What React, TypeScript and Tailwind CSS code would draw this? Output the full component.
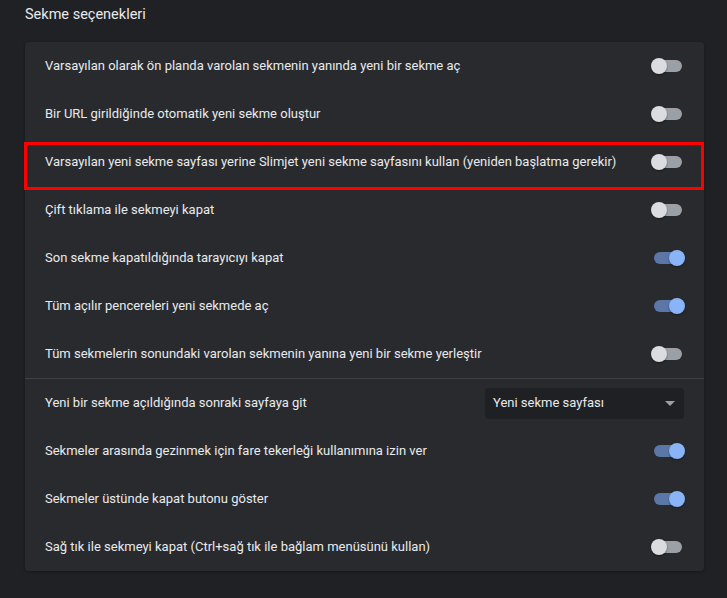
import React from 'react';

type Row =
  | { label: string; kind: 'toggle'; on: boolean }
  | { label: string; kind: 'select'; value: string };

const topRows: Row[] = [
  { label: 'Varsayılan olarak ön planda varolan sekmenin yanında yeni bir sekme aç', kind: 'toggle', on: false },
  { label: 'Bir URL girildiğinde otomatik yeni sekme oluştur', kind: 'toggle', on: false },
  { label: 'Varsayılan yeni sekme sayfası yerine Slimjet yeni sekme sayfasını kullan (yeniden başlatma gerekir)', kind: 'toggle', on: false },
  { label: 'Çift tıklama ile sekmeyi kapat', kind: 'toggle', on: false },
  { label: 'Son sekme kapatıldığında tarayıcıyı kapat', kind: 'toggle', on: true },
  { label: 'Tüm açılır pencereleri yeni sekmede aç', kind: 'toggle', on: true },
  { label: 'Tüm sekmelerin sonundaki varolan sekmenin yanına yeni bir sekme yerleştir', kind: 'toggle', on: false },
];

const bottomRows: Row[] = [
  { label: 'Yeni bir sekme açıldığında sonraki sayfaya git', kind: 'select', value: 'Yeni sekme sayfası' },
  { label: 'Sekmeler arasında gezinmek için fare tekerleği kullanımına izin ver', kind: 'toggle', on: true },
  { label: 'Sekmeler üstünde kapat butonu göster', kind: 'toggle', on: true },
  { label: 'Sağ tık ile sekmeyi kapat (Ctrl+sağ tık ile bağlam menüsünü kullan)', kind: 'toggle', on: false },
];

function Toggle({ on }: { on: boolean }) {
  return (
    <div className={`relative w-[28px] h-[12px] rounded-full ${on ? 'bg-[#5a77a8]' : 'bg-[#9aa0a6]'}`}>
      <span
        className={`absolute top-[-2px] w-[16px] h-[16px] rounded-full shadow-[0_1px_2px_rgba(0,0,0,0.4)] ${
          on ? 'left-[15px] bg-[#8ab4f8]' : 'left-[-3px] bg-[#dadce0]'
        }`}
      />
    </div>
  );
}

function Select({ value }: { value: string }) {
  return (
    <div className="w-[199px] h-[31px] rounded-[4px] bg-[#1f2023] flex items-center justify-between pl-[8px] pr-[9px] text-[13px] text-[#e8eaed]">
      <span>{value}</span>
      <svg width="10" height="5" viewBox="0 0 10 5">
        <path d="M0 0h10L5 5z" fill="#9aa0a6" />
      </svg>
    </div>
  );
}

function SettingRow({ row }: { row: Row }) {
  return (
    <div className="h-[48px] flex items-center justify-between pl-[20px]">
      <span className="text-[13px] text-[#e8eaed]">{row.label}</span>
      {row.kind === 'toggle' ? (
        <div className="pr-[22px]">
          <Toggle on={row.on} />
        </div>
      ) : (
        <div className="pr-[20px]">
          <Select value={row.value} />
        </div>
      )}
    </div>
  );
}

export default function App() {
  return (
    <div
      className="min-h-[598px] w-[727px] bg-[#202124] pl-[25px] pt-[6px]"
      style={{ fontFamily: 'Roboto, "Liberation Sans", sans-serif' }}
    >
      <h2 className="h-[18px] leading-[18px] text-[14.5px] text-[#e8eaed] font-normal">Sekme seçenekleri</h2>
      <div className="relative mt-[18px] w-[679px] rounded-[4px] bg-[#292a2d] shadow-[0_1px_3px_rgba(0,0,0,0.3)]">
        {topRows.map((r) => (
          <SettingRow key={r.label} row={r} />
        ))}
        <div className="h-px bg-[#3f4043]" />
        {bottomRows.map((r) => (
          <SettingRow key={r.label} row={r} />
        ))}
        <div className="absolute left-[-1px] top-[100px] w-[680px] h-[48px] border-[3px] border-[#ff0000]" />
      </div>
    </div>
  );
}
